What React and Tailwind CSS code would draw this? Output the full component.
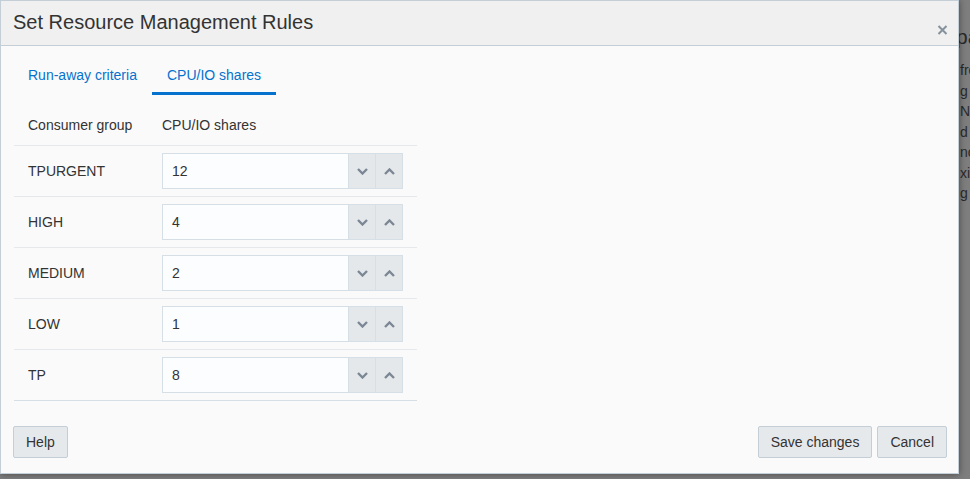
import { useState } from 'react';

const rows = [
  { name: 'TPURGENT', value: '12' },
  { name: 'HIGH', value: '4' },
  { name: 'MEDIUM', value: '2' },
  { name: 'LOW', value: '1' },
  { name: 'TP', value: '8' },
];

function Chevron({ up }) {
  return (
    <svg width="11" height="7" viewBox="0 0 11 7" fill="none">
      <polyline
        points={up ? '1,6 5.5,1.5 10,6' : '1,1 5.5,5.5 10,1'}
        stroke="#7b8794"
        strokeWidth="2.4"
        strokeLinejoin="miter"
      />
    </svg>
  );
}

function Spinner({ value }) {
  return (
    <div className="flex h-[36px] w-[241px] border border-[#d6dfe6]">
      <div className="flex flex-1 items-center bg-[#fcfdfe] pl-[9px] text-[14px] text-[#333]">{value}</div>
      <div className="flex w-[27px] items-center justify-center border-l border-[#d6dfe6] bg-[#e4e8eb]">
        <Chevron />
      </div>
      <div className="flex w-[27px] items-center justify-center border-l border-[#d6dfe6] bg-[#e4e8eb]">
        <Chevron up />
      </div>
    </div>
  );
}

function Button({ children }) {
  return (
    <button className="h-[32px] rounded-[2px] border border-[#c4ced7] bg-[#e6e9ec] px-3 text-[14px] text-[#333]">
      {children}
    </button>
  );
}

export default function App() {
  const [tab] = useState('cpu');

  return (
    <div className="flex h-[479px] w-[970px] overflow-hidden bg-[#7e7e7e] font-['Liberation_Sans',Arial,sans-serif]">
      <div className="relative z-10 flex h-[474px] w-[959px] shrink-0 flex-col border border-[#c4ced7] bg-[#fafafa] shadow-[0_0_7px_rgba(0,0,0,0.45)]">
        <div className="flex h-[45px] items-start justify-between border-b border-[#c4ced7] bg-[#f0f0f0] pl-3">
          <h1 className="mt-[9px] text-[20px] leading-6 text-[#333]">Set Resource Management Rules</h1>
          <svg className="mr-[10px] mt-[24px]" width="11" height="10" viewBox="0 0 11 10">
            <path d="M1.5 1 L9.5 9 M9.5 1 L1.5 9" stroke="#85919c" strokeWidth="2" />
          </svg>
        </div>

        <div className="flex pl-3 pt-[19px]">
          <div
            className={`border-b-[3px] px-[15px] pb-[7px] text-[14px] leading-5 text-[#0572ce] ${
              tab === 'run' ? 'border-[#0572ce]' : 'border-transparent'
            }`}
          >
            Run-away criteria
          </div>
          <div
            className={`border-b-[3px] px-[15px] pb-[7px] text-[14px] leading-5 text-[#0572ce] ${
              tab === 'cpu' ? 'border-[#0572ce]' : 'border-transparent'
            }`}
          >
            CPU/IO shares
          </div>
        </div>

        <div className="ml-[13px] mt-[10px] w-[403px] text-[14px] text-[#333]">
          <div className="flex h-[41px] items-center border-b border-[#e6e9ec]">
            <div className="w-[148px] pl-[14px]">Consumer group</div>
            <div>CPU/IO shares</div>
          </div>
          {rows.map((r, i) => (
            <div
              key={r.name}
              className={`flex h-[51px] items-center border-b ${
                i === rows.length - 1 ? 'border-[#d6dfe6]' : 'border-[#e6e9ec]'
              }`}
            >
              <div className="w-[148px] pl-[14px]">{r.name}</div>
              <Spinner value={r.value} />
            </div>
          ))}
        </div>

        <div className="mt-[25px] flex justify-between pl-3 pr-[11px]">
          <Button>Help</Button>
          <div className="flex gap-[5px]">
            <Button>Save changes</Button>
            <Button>Cancel</Button>
          </div>
        </div>
      </div>

      <div className="-ml-[3px] w-[14px] shrink-0 overflow-hidden whitespace-nowrap text-[#2a2a2a]">
        <div className="mt-[25px] text-[21px] leading-6">pa</div>
        <div className="ml-[4px] mt-[11px] text-[14px] leading-[20.5px]">
          <div>fre</div>
          <div>g</div>
          <div>N</div>
          <div>d</div>
          <div>no</div>
          <div>xis</div>
          <div>g</div>
        </div>
      </div>
    </div>
  );
}
